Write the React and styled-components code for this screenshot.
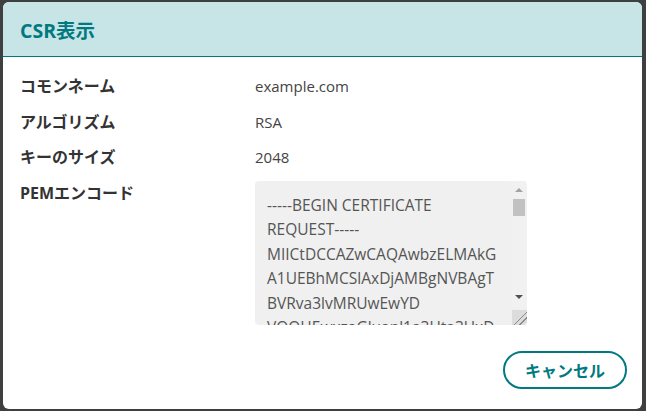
import styled, { createGlobalStyle } from 'styled-components';

const GlobalStyle = createGlobalStyle`
  html, body {
    margin: 0;
    padding: 0;
    background: #3e3f3f;
    font-family: "Open Sans", "Noto Sans CJK JP", sans-serif;
  }
  #root {
    height: 411px;
    overflow: hidden;
  }
`;

const csr = `-----BEGIN CERTIFICATE REQUEST-----
MIICtDCCAZwCAQAwbzELMAkGA1UEBhMCSlAxDjAMBgNVBAgTBVRva3lvMRUwEwYD
VQQHEwxzaGluanl1a3Uta3UxDTALBgNVBAoTBGFjbWUxFDASBgNVBAsTC2VuZ2lu
ZWVyaW5nMRQwEgYDVQQDEwtleGFtcGxlLmNvbTCCASIwDQYJKoZIhvcNAQEBBQAD
ggEPADCCAQoCggEBAMx2d9nFqTn0x3v1pQh8kT3yE8bJc5mQ2sWf0oXhP1aZg7Lk
-----END CERTIFICATE REQUEST-----`;

const rows = [
  { label: 'コモンネーム', value: 'example.com' },
  { label: 'アルゴリズム', value: 'RSA' },
  { label: 'キーのサイズ', value: '2048' },
];

export default function App() {
  return (
    <>
      <GlobalStyle />
      <Dialog>
        <Header>
          <Title>CSR表示</Title>
        </Header>
        <Body>
          {rows.map((row) => (
            <Row key={row.label}>
              <Label>{row.label}</Label>
              <Value>{row.value}</Value>
            </Row>
          ))}
          <Row>
            <Label>PEMエンコード</Label>
            <PemBox>
              <Pem readOnly value={csr} />
              <ScrollRail>
                <Arrow $up />
                <Thumb />
                <Arrow />
              </ScrollRail>
            </PemBox>
          </Row>
        </Body>
        <Footer>
          <CancelButton type="button">キャンセル</CancelButton>
        </Footer>
      </Dialog>
    </>
  );
}

const Dialog = styled.section`
  display: flex;
  flex-direction: column;
  width: 639px;
  height: 407px;
  margin: 2px 0 0 3px;
  background: #fff;
  border-radius: 6px;
  overflow: hidden;
`;

const Header = styled.header`
  display: flex;
  align-items: center;
  height: 54px;
  padding: 0 17px;
  background: #c7e4e6;
  border-bottom: 1px solid #007a80;
`;

const Title = styled.h2`
  margin: 0;
  font-size: 19.5px;
  font-weight: 700;
  color: #007a80;
`;

const Body = styled.div`
  display: flex;
  flex-direction: column;
  gap: 13.5px;
  padding: 18px 17px 0;
`;

const Row = styled.div`
  display: flex;
  align-items: flex-start;
`;

const Label = styled.div`
  width: 235px;
  flex-shrink: 0;
  font-size: 16px;
  line-height: 22px;
  font-weight: 700;
  color: #333;
`;

const Value = styled.div`
  font-size: 15px;
  line-height: 22px;
  color: #444;
`;

const PemBox = styled.div`
  position: relative;
  width: 272px;
  height: 144px;
  margin-top: -1px;
  border-radius: 4px;
  overflow: hidden;
`;

const Pem = styled.textarea`
  display: block;
  box-sizing: border-box;
  width: 272px;
  height: 144px;
  padding: 12px 28px 12px 12px;
  border: none;
  background: #f0f0f0;
  color: #555;
  font-family: "Open Sans", sans-serif;
  font-size: 15.5px;
  line-height: 24.5px;
  outline: none;
  resize: both;
  overflow: hidden;

  &::-webkit-resizer {
    background:
      linear-gradient(135deg, transparent 55%, #8a8a8a 55%, #8a8a8a 60%, transparent 60%,
        transparent 72%, #8a8a8a 72%, #8a8a8a 77%, transparent 77%),
      #dcdcdc;
  }
`;

const ScrollRail = styled.div`
  position: absolute;
  top: 0;
  right: 0;
  bottom: 18px;
  width: 16px;
  display: flex;
  flex-direction: column;
  align-items: center;
  justify-content: space-between;
  background: #f1f1f1;
`;

const Arrow = styled.div`
  width: 0;
  height: 0;
  margin: ${(p) => (p.$up ? '7px 0 0' : '0 0 8px')};
  border-left: 4px solid transparent;
  border-right: 4px solid transparent;
  ${(p) => (p.$up
    ? 'border-bottom: 4px solid #a3a3a3;'
    : 'border-top: 4px solid #505050;')}
`;

const Thumb = styled.div`
  width: 12px;
  height: 17px;
  margin-top: 7px;
  margin-bottom: auto;
  background: #c1c1c1;
`;

const Footer = styled.footer`
  display: flex;
  justify-content: flex-end;
  margin-top: auto;
  padding: 0 15px 20px;
`;

const CancelButton = styled.button`
  width: 124px;
  height: 38px;
  border: 2px solid #007a80;
  border-radius: 19px;
  background: #fff;
  color: #007a80;
  font-family: "Open Sans", "Noto Sans CJK JP", sans-serif;
  font-size: 16px;
  font-weight: 700;
  cursor: pointer;
`;
